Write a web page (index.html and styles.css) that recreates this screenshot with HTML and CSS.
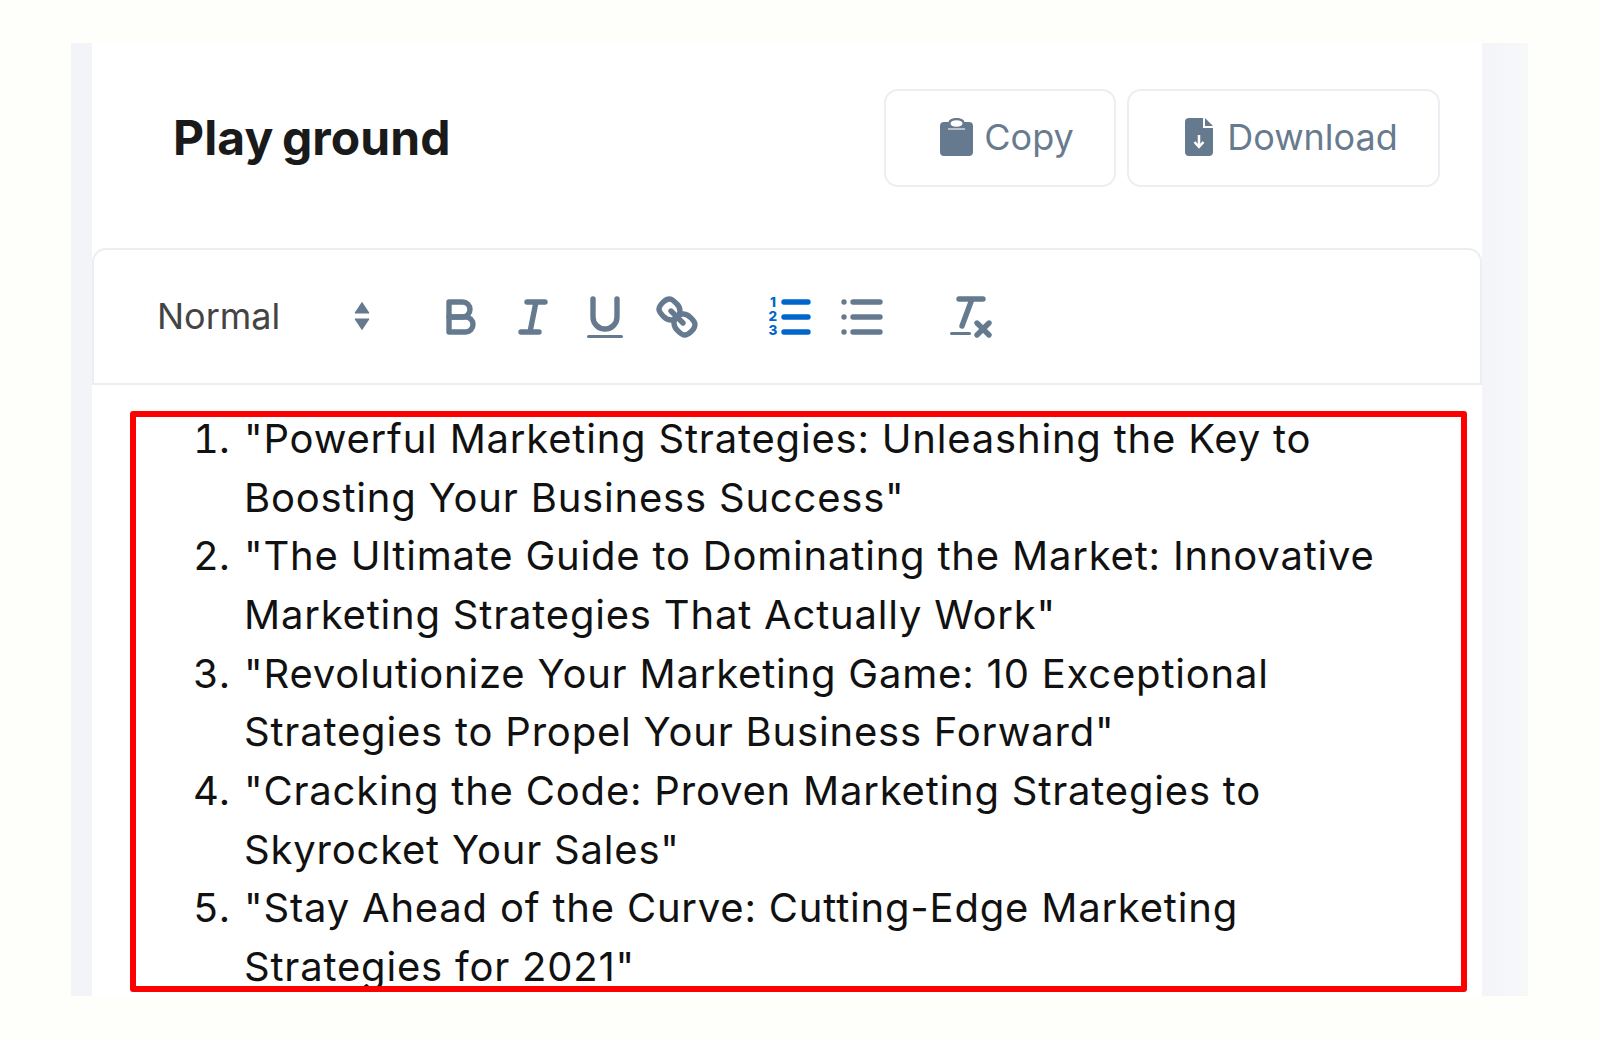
FILE: index.html
```html
<!DOCTYPE html>
<html lang="en">
<head>
    <meta charset="UTF-8">
    <meta name="viewport" content="width=device-width, initial-scale=1.0">
    <title>Play ground</title>
    <link rel="stylesheet" href="styles.css">
</head>
<body>
    <div class="panel">
        <div class="card">
            <div class="header">
                <h1>Play ground</h1>
                <div class="actions">
                    <button class="action-btn copy-btn">
                        <svg class="action-icon" viewBox="0 0 33 38">
                            <path fill-rule="evenodd" d="M4 4h4.500C9 1.600 12 0 16.500 0S24 1.600 24.500 4H29a4 4 0 0 1 4 4v26a4 4 0 0 1-4 4H4a4 4 0 0 1-4-4V8a4 4 0 0 1 4-4zM16.500 2.200c-4 0-6 1.500-6 3.300s2 3.300 6 3.300 6-1.500 6-3.300-2-3.300-6-3.300z"/>
                            <path d="M8 10h17v2H8z" fill="#b8c2cd"/>
                        </svg>
                        Copy
                    </button>
                    <button class="action-btn download-btn">
                        <svg class="action-icon" viewBox="0 0 28 38">
                            <path d="M4 0h14v10h10v24a4 4 0 0 1-4 4H4a4 4 0 0 1-4-4V4a4 4 0 0 1 4-4z"/>
                            <path d="M20 0l8 8h-8z"/>
                            <path d="M14 17v11M9.500 24l4.500 5 4.500-5" fill="none" stroke="#fff" stroke-width="2.500"/>
                        </svg>
                        Download
                    </button>
                </div>
            </div>

            <div class="toolbar">
                <span class="picker">
                    Normal
                    <svg class="picker-arrows" viewBox="0 0 18 36">
                        <path d="M9 1l8 12a1 1 0 0 1-1 2H2a1 1 0 0 1-1-2zM9 35L1 23a1 1 0 0 1 1-2h14a1 1 0 0 1 1 2z"/>
                    </svg>
                </span>

                <span class="tool-group format-group">
                    <button class="tool">
                        <svg viewBox="0 0 18 18">
                            <path d="M5,4H9.500A2.500,2.500,0,0,1,12,6.500v0A2.500,2.500,0,0,1,9.500,9H5V4Z"/>
                            <path d="M5,9h5.500A2.500,2.500,0,0,1,13,11.500v0A2.500,2.500,0,0,1,10.500,14H5V9Z"/>
                        </svg>
                    </button>
                    <button class="tool">
                        <svg viewBox="0 0 18 18">
                            <path d="M7 4h6M5 14h6M8 14l2-10"/>
                        </svg>
                    </button>
                    <button class="tool">
                        <svg viewBox="0 0 18 18">
                            <path d="M5,3V9a4,4,0,0,0,4,4h0a4,4,0,0,0,4-4V3"/>
                            <rect class="fill" x="3" y="15" width="12" height="1" rx=".5"/>
                        </svg>
                    </button>
                    <button class="tool">
                        <svg viewBox="0 0 18 18">
                            <path d="M7 7l4 4"/>
                            <path d="M8.900,4.577a3.476,3.476,0,0,1,.36,4.679A3.476,3.476,0,0,1,4.577,8.900C3.185,7.500,2.035,6.400,4.217,4.217S7.500,3.185,8.900,4.577Z"/>
                            <path d="M13.423,9.100a3.476,3.476,0,0,0-4.679-.36,3.476,3.476,0,0,0,.36,4.679c1.392,1.392,2.500,2.542,4.679.36S14.815,10.500,13.423,9.100Z"/>
                        </svg>
                    </button>
                </span>

                <span class="tool-group">
                    <button class="tool active">
                        <svg viewBox="0 0 18 18">
                            <path d="M7 4h8M7 9h8M7 14h8"/>
                            <text x="3.300" y="5.700">1</text>
                            <text x="3.300" y="10.400">2</text>
                            <text x="3.300" y="15.100">3</text>
                        </svg>
                    </button>
                    <button class="tool">
                        <svg viewBox="0 0 18 18">
                            <path d="M6 4h9M6 9h9M6 14h9M3 4h0M3 9h0M3 14h0"/>
                        </svg>
                    </button>
                </span>

                <span class="tool-group">
                    <button class="tool">
                        <svg viewBox="0 0 18 18">
                            <path d="M5 3h8M6 12L9.350 3M11 11l4 4M15 11l-4 4"/>
                            <rect class="fill" x="2" y="14" width="7" height="1" rx=".5"/>
                        </svg>
                    </button>
                </span>
            </div>

            <div class="editor">
                <ol>
                    <li><span>"Powerful Marketing Strategies: Unleashing the Key to Boosting Your Business Success"</span></li>
                    <li><span>"The Ultimate Guide to Dominating the Market: Innovative Marketing Strategies That Actually Work"</span></li>
                    <li><span>"Revolutionize Your Marketing Game: 10 Exceptional Strategies to Propel Your Business Forward"</span></li>
                    <li><span>"Cracking the Code: Proven Marketing Strategies to Skyrocket Your Sales"</span></li>
                    <li><span>"Stay Ahead of the Curve: Cutting-Edge Marketing Strategies for 2021"</span></li>
                </ol>
            </div>
        </div>
    </div>
</body>
</html>
```

FILE: styles.css
```css
* {
    margin: 0;
    padding: 0;
    box-sizing: border-box;
}

body {
    background: #fefffa;
    height: 1040px;
    padding: 43px 72px 44px 71px;
    font-family: 'Inter', sans-serif;
    overflow: hidden;
}

.panel {
    background: linear-gradient(to right, #f3f4f8 96%, #f7f8fa);
    height: 953px;
    padding: 0 46px 0 21px;
}

.card {
    background: #fff;
    height: 100%;
    display: flex;
    flex-direction: column;
}

.header {
    display: flex;
    justify-content: space-between;
    align-items: center;
    padding: 46px 42px 61px 81px;
}

h1 {
    font-size: 48px;
    line-height: 58px;
    font-weight: 700;
    color: #1a1a1a;
    letter-spacing: 0.1px;
    word-spacing: -3px;
}

.actions {
    display: flex;
    gap: 11px;
}

.action-btn {
    height: 98px;
    display: flex;
    align-items: center;
    justify-content: center;
    gap: 11px;
    padding-bottom: 2px;
    background: #fff;
    border: 2px solid #eceef3;
    border-radius: 14px;
    color: #687b8e;
    font-family: 'Inter', sans-serif;
    font-size: 36px;
}

.copy-btn {
    width: 232px;
    padding-left: 14px;
}

.download-btn {
    width: 313px;
    gap: 14px;
    padding-left: 16px;
}

.action-icon {
    height: 38px;
    fill: #667a8f;
}

.copy-btn .action-icon {
    width: 33px;
}

.download-btn .action-icon {
    width: 28px;
}

.toolbar {
    height: 137px;
    display: flex;
    align-items: center;
    padding-left: 63px;
    border: 2px solid #eceef3;
    border-radius: 14px 14px 0 0;
}

.picker {
    width: 268px;
    display: flex;
    align-items: center;
    justify-content: space-between;
    padding-right: 54px;
    margin-bottom: 2px;
    font-size: 36px;
    line-height: 42px;
    color: #444;
}

.picker-arrows {
    width: 18px;
    height: 30px;
    fill: #667a8f;
}

.tool-group {
    display: flex;
    margin-right: 37px;
}

.format-group {
    margin-right: 41px;
}

.tool {
    width: 72px;
    height: 72px;
    display: flex;
    align-items: center;
    justify-content: center;
    background: none;
    border: none;
}

.tool svg {
    width: 54px;
    height: 54px;
    fill: none;
    stroke: #667a8f;
    stroke-width: 1.800;
    stroke-linecap: round;
    stroke-linejoin: round;
}

.tool svg .fill {
    fill: #667a8f;
    stroke: none;
}

.tool.active svg {
    stroke: #0066cc;
}

.tool.active text {
    font-family: 'Inter', sans-serif;
    font-size: 4.500px;
    font-weight: 800;
    text-anchor: middle;
    fill: #0066cc;
    stroke: none;
}

.editor {
    margin: 26px 15px 4px 38px;
    flex: 1;
    border: 6px solid #f00;
    border-radius: 3px;
    overflow: hidden;
}

ol {
    margin-top: -7px;
    padding: 0 60px 0 108px;
    font-size: 40px;
    line-height: 58.650px;
    color: #111;
}

li::marker {
    content: counter(list-item) ". \200A";
}

li span {
    letter-spacing: 0.800px;
}
```
